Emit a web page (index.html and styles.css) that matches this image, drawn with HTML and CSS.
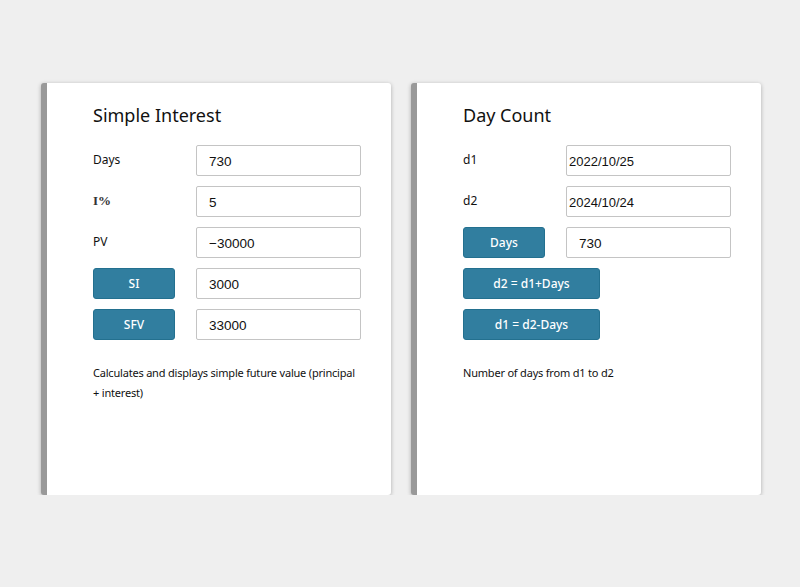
FILE: index.html
```html
<!DOCTYPE html>
<html>
<head>
<meta charset="utf-8">
<link rel="stylesheet" href="styles.css">
</head>
<body>
<div class="cards">
  <section class="card">
    <h2 class="title">Simple Interest</h2>
    <div class="form">
      <label class="lbl">Days</label><input class="field pad" value="730">
      <label class="lbl lbl-serif">I%</label><input class="field pad" value="5">
      <label class="lbl">PV</label><input class="field pad" value="−30000">
      <button class="btn">SI</button><input class="field pad" value="3000">
      <button class="btn">SFV</button><input class="field pad" value="33000">
    </div>
    <p class="desc">Calculates and displays simple future value (principal + interest)</p>
  </section>
  <section class="card">
    <h2 class="title">Day Count</h2>
    <div class="form">
      <label class="lbl">d1</label><input class="field date" value="2022/10/25">
      <label class="lbl">d2</label><input class="field date" value="2024/10/24">
      <button class="btn">Days</button><input class="field pad" value="730">
      <button class="btn wide">d2 = d1+Days</button><span></span>
      <button class="btn wide">d1 = d2-Days</button><span></span>
    </div>
    <p class="desc">Number of days from d1 to d2</p>
  </section>
</div>
</body>
</html>
```
FILE: styles.css
```css
html, body {
  margin: 0;
  padding: 0;
}
body {
  background: #efefef;
  font-family: "Noto Sans", "Open Sans", sans-serif;
  color: #111;
}
.cards {
  display: flex;
  gap: 20px;
  padding: 83px 0 0 41px;
}
.card {
  box-sizing: border-box;
  width: 350px;
  height: 412px;
  background: #fff;
  border-left: 6px solid #999;
  border-radius: 3px;
  box-shadow: 0 1px 4px rgba(0, 0, 0, 0.28);
  padding: 20px 30px 0 46px;
}
.title {
  margin: 0;
  font-size: 18px;
  font-weight: normal;
  line-height: 24px;
  height: 24px;
}
.form {
  margin-top: 18px;
  display: grid;
  grid-template-columns: 103px 165px;
  grid-auto-rows: 31px;
  row-gap: 10px;
  align-items: center;
}
.lbl {
  font-size: 12px;
  line-height: 16px;
  margin-top: -2px;
}
.lbl-serif {
  font-family: "Liberation Serif", serif;
  font-size: 13px;
  font-weight: bold;
  color: #333;
}
.field {
  box-sizing: border-box;
  height: 31px;
  width: 165px;
  margin: 0;
  border: 1px solid #c4c4c4;
  border-radius: 2px;
  background: #fff;
  font-family: "Liberation Sans", Arial, sans-serif;
  font-size: 13.5px;
  color: #111;
  outline: none;
}
.pad {
  padding: 1px 11px 0 12px;
}
.date {
  padding: 1px 2px 0 2px;
  font-size: 13px;
}
.btn {
  box-sizing: border-box;
  width: 82px;
  height: 31px;
  margin: 0;
  padding: 0;
  background: #317e9f;
  border: 1px solid #23708f;
  border-radius: 3px;
  color: #fff;
  font-family: "Noto Sans", "Open Sans", sans-serif;
  font-size: 12px;
  font-weight: 500;
}
.btn.wide {
  width: 137px;
}
.desc {
  margin: 23px 4px 0 0;
  font-size: 11px;
  letter-spacing: -0.2px;
  line-height: 20px;
}
```
